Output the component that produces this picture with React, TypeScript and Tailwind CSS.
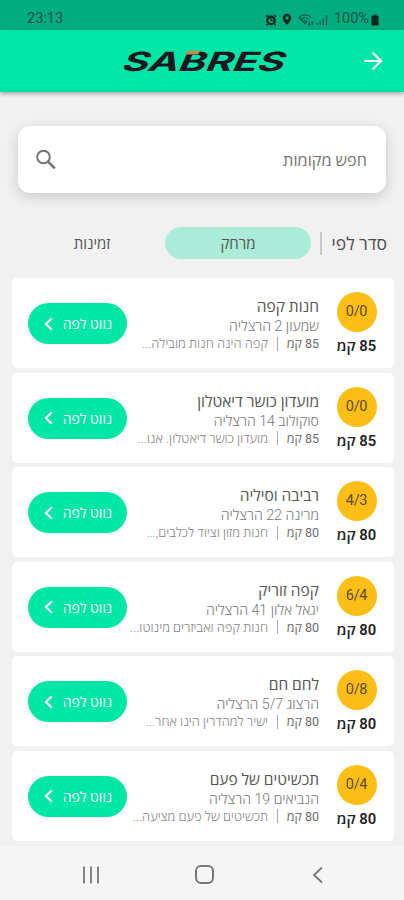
type Place = {
  name: string;
  address: string;
  about: string;
  spots: string;
  distance: string;
};

const places: Place[] = [
  { name: "חנות קפה", address: "שמעון 2 הרצליה", about: "קפה הינה חנות מובילה...", spots: "0/0", distance: "85 קמ" },
  { name: "מועדון כושר דיאטלון", address: "סוקולוב 14 הרצליה", about: "מועדון כושר דיאטלון. אנו...", spots: "0/0", distance: "85 קמ" },
  { name: "רביבה וסיליה", address: "מרינה 22 הרצליה", about: "חנות מזון וציוד לכלבים,...", spots: "4/3", distance: "80 קמ" },
  { name: "קפה זוריק", address: "יגאל אלון 41 הרצליה", about: "חנות קפה ואביזרים מינוטו...", spots: "6/4", distance: "80 קמ" },
  { name: "לחם חם", address: "הרצוג 5/7 הרצליה", about: "ישיר למהדרין הינו אחר...", spots: "0/8", distance: "80 קמ" },
  { name: "תכשיטים של פעם", address: "הנביאים 19 הרצליה", about: "תכשיטים של פעם מציעה...", spots: "0/4", distance: "80 קמ" },
];

function StatusBar() {
  return (
    <div dir="ltr" className="flex h-[30px] items-center justify-between bg-[#00ad7e] pt-[9px] pr-[25px] pl-[27px] text-[#07513f]">
      <span className="text-[14.5px] leading-none">23:13</span>
      <div className="flex items-center">
        <svg width="12" height="12" viewBox="0 0 12 12" className="text-[#07281f]">
          <circle cx="6" cy="6.4" r="3.7" fill="none" stroke="currentColor" strokeWidth="2.4" />
          <path d="M1 2.8 3 1M11 2.8 9 1M2.5 10 1.5 11.4M9.5 10l1 1.4M6 4.4v2.2h1.7" fill="none" stroke="currentColor" strokeWidth="1.5" />
        </svg>
        <svg width="10" height="13" viewBox="0 0 10 13" className="ml-[5px] text-[#07281f]">
          <path fill="currentColor" fillRule="evenodd" d="M5 .8a4.2 4.2 0 0 0-4.2 4.2C.8 8 5 12 5 12s4.2-4 4.2-7A4.2 4.2 0 0 0 5 .8Zm0 2.5a1.7 1.7 0 1 1 0 3.4 1.7 1.7 0 0 1 0-3.4Z" />
        </svg>
        <svg width="16" height="14" viewBox="0 0 16 14" className="ml-[6px]" fill="none" stroke="currentColor" strokeWidth="1.1">
          <path d="M1 4.5C4.5 1 10 1 13 4.5M3 6.5c2.300-2.200 5.700-2.200 8 0M5 8.500c1.200-1.100 2.800-1.100 4 0L7 10.700ZM1 4.500l4 4" />
          <path d="M11.500 8.500v4M10 10.900l1.500 1.600M14 12.500v-4M15.300 10.100 14 8.500" />
        </svg>
        <svg width="12" height="12" viewBox="0 0 12 12" className="ml-[2px]" stroke="currentColor" strokeWidth="1.2">
          <path d="M1.300 9v2M4.200 7v4M7.300 4.500V11M10.500 1v10" />
        </svg>
        <span className="ml-[6px] text-[14.5px] leading-none">100%</span>
        <svg width="8" height="12" viewBox="0 0 8 12" className="ml-[2px] text-[#07281f]">
          <path fill="currentColor" d="M2.500.5h3v1.300H7a.6.6 0 0 1 .6.6v8.400a.8.8 0 0 1-.8.8H1.200a.8.8 0 0 1-.8-.8V2.400A.6.6 0 0 1 1 1.800h1.500Z" />
        </svg>
      </div>
    </div>
  );
}

function Logo() {
  return (
    <svg width="184" height="32" viewBox="0 0 184 32" direction="ltr">
      <g transform="translate(8 25.500) skewX(-24)">
        <text x="0" y="0" textLength="162" lengthAdjust="spacingAndGlyphs" fill="#1b1720" className="font-['Inter'] text-[26.500px] font-bold">
          SABRES
        </text>
      </g>
      <path d="M77 5.500h11.500l-2.500 4H72.500Z" fill="#b79255" />
    </svg>
  );
}

function Header() {
  return (
    <header className="relative flex h-[62px] items-center justify-center bg-[#00e6a8] pl-[4px] shadow-[0_2px_4px_rgba(0,0,0,0.3)]">
      <Logo />
      <svg width="20" height="20" viewBox="0 0 20 20" className="absolute top-[21px] left-[363px]" fill="none" stroke="#fff" strokeWidth="2.2">
        <path d="M1.300 10h16.500M9.500 1.500 18 10l-8.500 8.500" />
      </svg>
    </header>
  );
}

function SearchBox() {
  return (
    <div className="mx-[18px] mt-[34px] flex h-[67px] items-center justify-between rounded-[12px] bg-white pr-[19px] pl-[17px] shadow-[0_4px_14px_rgba(0,0,0,0.16)]">
      <span className="pt-[3px] text-[16.3px] text-[#747474]">חפש מקומות</span>
      <svg width="22" height="22" viewBox="0 0 22 22" fill="none" stroke="#757575" strokeWidth="2">
        <circle cx="8.500" cy="8" r="6.300" />
        <path d="m13 12.600 6.800 6.800" strokeWidth="2.500" />
      </svg>
    </div>
  );
}

function SortBar() {
  return (
    <div className="mt-[34px] flex h-[32px] items-center pr-[17px] text-[#555]">
      <span className="w-[57px] pt-[3px] text-[17.500px] whitespace-nowrap text-[#4d4d4d]">סדר לפי</span>
      <span className="mr-[8px] h-[23px] w-[2px] bg-[#c9c9c9]" />
      <button className="mr-[9px] h-[32px] w-[146px] rounded-full bg-[#aaecd7] pt-[2px] text-[15px]">מרחק</button>
      <button className="h-[32px] w-[146px] pt-[2px] text-[15px]">זמינות</button>
    </div>
  );
}

function PlaceCard({ place }: { place: Place }) {
  return (
    <li className="flex h-[90px] items-start rounded-[5px] bg-white pr-[17px] pl-[16px]">
      <div className="flex w-[41px] shrink-0 flex-col items-center pt-[14px]">
        <span className="flex size-[40px] items-center justify-center rounded-full bg-[#fdbf17] text-[14.5px] tracking-[-0.3px] text-[#5c4a1c]">
          {place.spots}
        </span>
        <span className="mt-[4px] text-[14.8px] leading-[20px] font-semibold whitespace-nowrap text-[#222]">{place.distance}</span>
      </div>
      <div className="mr-[17px] min-w-0 flex-1 pt-[20px] whitespace-nowrap">
        <h2 className="text-[15.5px] leading-[19px] text-[#555]">{place.name}</h2>
        <p className="text-[14.2px] leading-[18px] font-light text-[#777]">{place.address}</p>
        <div className="flex h-[17px] items-center text-[13px] leading-[17px]">
          <span className="w-[33px] text-[12.5px] text-[#6a6a6a]">{place.distance}</span>
          <span className="mr-[8px] h-[14px] w-px bg-[#aaa]" />
          <span className="mr-[9px] font-light text-[#858585]">{place.about}</span>
        </div>
      </div>
      <button className="mt-[25px] flex h-[41px] w-[99px] shrink-0 items-center rounded-full bg-[#00e6a5] pr-[15px] text-[14px] text-white">
        <span className="w-[49px] pt-[2px] whitespace-nowrap">נווט לפה</span>
        <svg width="9" height="14" viewBox="0 0 9 14" className="mr-[10px]" fill="none" stroke="#fff" strokeWidth="2.300">
          <path d="M7.800 1.300 2 7l5.800 5.700" />
        </svg>
      </button>
    </li>
  );
}

function NavBar() {
  return (
    <nav dir="ltr" className="flex flex-1 items-center bg-[#f5f5f5] pt-[4px] pl-[82px] text-[#777]">
      <svg width="18" height="18" viewBox="0 0 18 18" stroke="currentColor" strokeWidth="1.800">
        <path d="M2 .5v17M9 .5v17M16 .5v17" />
      </svg>
      <span className="ml-[95px] size-[19px] rounded-[6px] border-2 border-current" />
      <svg width="12" height="18" viewBox="0 0 12 18" className="ml-[98px]" fill="none" stroke="currentColor" strokeWidth="1.800">
        <path d="M10 1.500 2 9l8 7.500" />
      </svg>
    </nav>
  );
}

export default function App() {
  return (
    <div dir="rtl" className="flex h-[900px] w-[404px] flex-col overflow-hidden bg-[#f1f1f1] font-['Roboto','Open_Sans','Noto_Sans',sans-serif]">
      <StatusBar />
      <Header />
      <SearchBox />
      <SortBar />
      <ul className="mt-[19px] mr-[10px] mb-[5px] ml-[12px] flex flex-col gap-[4.5px]">
        {places.map((place) => (
          <PlaceCard key={place.name} place={place} />
        ))}
      </ul>
      <NavBar />
    </div>
  );
}
